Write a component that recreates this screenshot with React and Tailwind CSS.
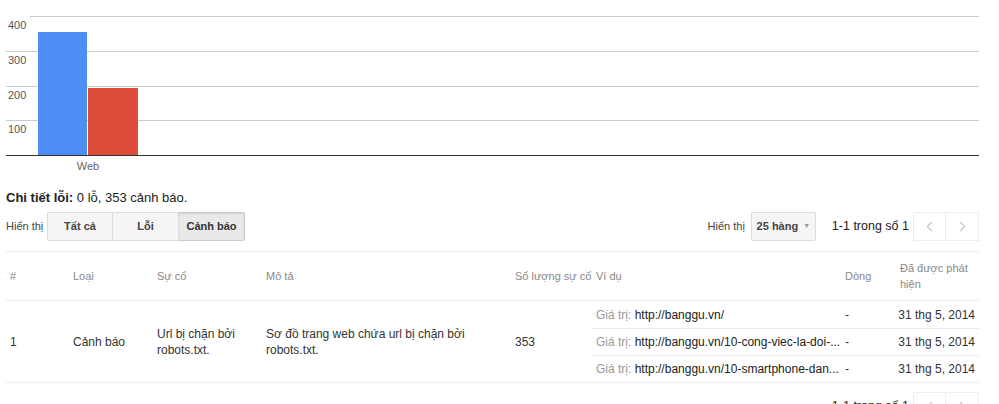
import { ChevronLeft, ChevronRight } from "lucide-react";

const examples = [
  "http://banggu.vn/",
  "http://banggu.vn/10-cong-viec-la-doi-...",
  "http://banggu.vn/10-smartphone-dan...",
];

function Chart() {
  const lines = [16, 51, 86, 120];
  const labels = ["400", "300", "200", "100"];
  return (
    <svg width="999" height="176" className="block">
      {lines.map((y, i) => (
        <line key={y} x1={i === 0 ? 30 : 6} x2="979" y1={y + 0.5} y2={y + 0.5} stroke="#cccccc" />
      ))}
      {labels.map((t, i) => (
        <text key={t} x="8" y={lines[i] + 13} fontSize="11" fill="#555" fontFamily="Liberation Sans, Arial, sans-serif">
          {t}
        </text>
      ))}
      <rect x="38" y="32" width="49" height="123" fill="#4d8ef5" />
      <rect x="88" y="88" width="50" height="67" fill="#dc4c38" />
      <line x1="6" x2="979" y1="155.5" y2="155.5" stroke="#333333" />
      <text x="88" y="170" fontSize="11" fill="#666" textAnchor="middle" fontFamily="Liberation Sans, Arial, sans-serif">
        Web
      </text>
    </svg>
  );
}

function Pager() {
  return (
    <div className="flex items-center">
      <span className="text-[12.5px] text-[#222] mr-[4px]">1-1 trong số 1</span>
      <div className="flex h-[29px]">
        <button className="w-[33px] flex items-center justify-center border border-[#eeeeee] text-[#c4c4c4]">
          <ChevronLeft size={17} strokeWidth={1.5} />
        </button>
        <button className="w-[33px] flex items-center justify-center border border-l-0 border-[#eeeeee] text-[#c4c4c4]">
          <ChevronRight size={17} strokeWidth={1.5} />
        </button>
      </div>
    </div>
  );
}

const cols = "grid grid-cols-[63px_84px_109px_249px_81px_249px_55px_83px]";

export default function App() {
  return (
    <div className="w-[999px] h-[404px] overflow-hidden bg-white font-['Liberation_Sans',Arial,sans-serif] text-[#333]">
      <Chart />

      <div className="px-[6px] w-[985px]">
        <p className="text-[13px] text-[#222] mt-[14px] leading-[16px]">
          <span className="font-bold">Chi tiết lỗi:</span> 0 lỗ, 353 cảnh báo.
        </p>

        {/* toolbar */}
        <div className="flex items-center justify-between mt-[6px]">
          <div className="flex items-center">
            <span className="text-[11px] text-[#444] w-[41px]">Hiển thị</span>
            <div className="flex h-[29px] text-[11px] font-bold text-[#444]">
              <button className="w-[66px] border border-[#dcdcdc] bg-[#f5f5f5] rounded-l-[2px]">Tất cả</button>
              <button className="w-[66px] border border-l-0 border-[#dcdcdc] bg-[#f5f5f5]">Lỗi</button>
              <button className="w-[66px] border border-l-0 border-[#cccccc] bg-[#e9e9e9] text-[#333] rounded-r-[2px] shadow-[inset_0_1px_2px_rgba(0,0,0,0.1)]">
                Cảnh báo
              </button>
            </div>
          </div>
          <div className="flex items-center">
            <span className="text-[11px] text-[#444] mr-[6px]">Hiển thị</span>
            <button className="h-[29px] w-[65px] flex items-center justify-center gap-[5px] border border-[#dcdcdc] bg-[#f5f5f5] text-[11px] font-bold text-[#444] rounded-[2px] mr-[16px]">
              25 hàng
              <span className="text-[7px] text-[#999]">▼</span>
            </button>
            <Pager />
          </div>
        </div>

        {/* table */}
        <div className="mt-[10px] border-t border-[#ebebeb]">
          <div className={`${cols} h-[48px] items-center text-[11px] text-[#888]`}>
            <div className="pl-[4px]">#</div>
            <div className="pl-[4px]">Loại</div>
            <div className="pl-[4px]">Sự cố</div>
            <div className="pl-[4px]">Mô tả</div>
            <div className="pl-[4px]">Số lượng sự cố</div>
            <div className="pl-[4px]">Ví dụ</div>
            <div className="pl-[4px]">Dòng</div>
            <div className="pl-[4px] leading-[16px]">Đã được phát hiện</div>
          </div>
          <div className={`${cols} border-t border-b border-[#ebebeb] text-[12px] text-[#333]`}>
            <div className="pl-[4px] self-center">1</div>
            <div className="pl-[4px] self-center">Cảnh báo</div>
            <div className="pl-[4px] self-center leading-[16px] pr-2">Url bị chặn bởi robots.txt.</div>
            <div className="pl-[4px] self-center leading-[16px] pr-8">Sơ đồ trang web chứa url bị chặn bởi robots.txt.</div>
            <div className="pl-[4px] self-center">353</div>
            <div className="col-span-3 flex flex-col">
              {examples.map((u, i) => (
                <div
                  key={u}
                  className={`grid grid-cols-[249px_55px_83px] h-[27px] items-center ${i > 0 ? "border-t border-[#ebebeb]" : ""}`}
                >
                  <div className="pl-[4px] whitespace-nowrap">
                    <span className="text-[#999]">Giá trị:</span> <span className="text-[#222]">{u}</span>
                  </div>
                  <div className="pl-[4px]">-</div>
                  <div className="pr-[4px] text-right whitespace-nowrap">31 thg 5, 2014</div>
                </div>
              ))}
            </div>
          </div>
          <div className="flex justify-end mt-[9px]">
            <Pager />
          </div>
        </div>
      </div>
    </div>
  );
}
